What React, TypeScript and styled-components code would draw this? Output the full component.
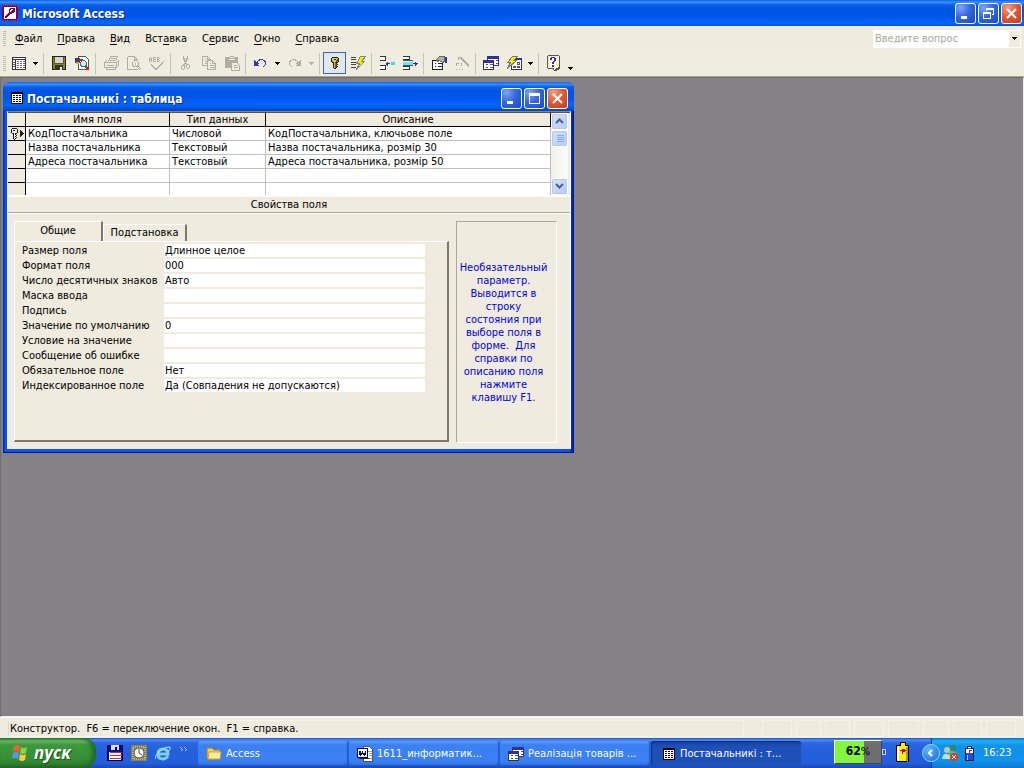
import React from "react";
import styled, { createGlobalStyle, css } from "styled-components";

const FACE = "#efebde";
const GREY = "#aca899";
const OFF = "#b3afa0";

const Global = createGlobalStyle`
  *, *::before, *::after { box-sizing: border-box; }
  body {
    margin: 0;
    background: #848284;
    font: 11px/14px "DejaVu Sans Condensed", "DejaVu Sans", sans-serif;
    color: #000;
    cursor: default;
  }
  button, input { font: inherit; color: inherit; padding: 0; margin: 0; border: 0; border-radius: 0; background: none; }
  svg { display: block; flex: none; }
`;

/* ---------- shell ---------- */

const Shell = styled.div`
  min-height: 100vh;
  display: flex;
  flex-direction: column;
`;

const blueBar = css`
  background: linear-gradient(#0a5cf0 0, #3a93ff 2px, #0a5eea 5px, #0054e3 9px, #0055e8 16px, #0166ff 23px, #0150d8 27px, #003cc0 30px);
`;

const TitleBar = styled.header`
  ${blueBar}
  height: 26px;
  flex: none;
  display: flex;
  align-items: center;
  gap: 4px;
  padding: 0 2px;
`;

const Title = styled.h1`
  flex: 1;
  margin: 0;
  padding-top: 1px;
  font-size: 12px;
  line-height: 16px;
  font-weight: bold;
  color: #fff;
  text-shadow: 1px 1px 0 #0a2a90;
  white-space: nowrap;
`;

const CaptionButtons = styled.div`
  display: flex;
  gap: 2px;
`;

const CaptionButton = styled.button<{ $close?: boolean }>`
  width: 21px;
  height: 21px;
  display: grid;
  place-items: center;
  border: 1px solid #fff;
  border-radius: 3px;
  background: ${(p) =>
    p.$close
      ? "radial-gradient(circle at 30% 20%, #f0a088 0, #e25a35 45%, #c83c14 100%)"
      : "radial-gradient(circle at 25% 20%, #7ea4f4 0, #3468e0 45%, #1c48c8 100%)"};
`;

const Grip = styled.span`
  width: 3px;
  height: 15px;
  flex: none;
  background: repeating-linear-gradient(#c1bdac 0 1px, transparent 1px 2px);
`;

const MenuBar = styled.nav`
  height: 25px;
  flex: none;
  display: flex;
  align-items: center;
  padding: 0 3px;
  background: ${FACE};
  ${Grip} { margin-right: 2px; }
`;

const MenuItem = styled.button`
  height: 20px;
  padding: 0 8px 0 7px;
  white-space: nowrap;
  u { text-underline-offset: 2px; }
`;

const AskBox = styled.div`
  margin-left: auto;
  width: 148px;
  height: 18px;
  display: flex;
  border: 1px solid #fff;
  background: #fff;
  input { flex: 1; min-width: 0; padding-left: 1px; outline: 0; }
  input::placeholder { color: ${GREY}; opacity: 1; }
  button { width: 11px; display: grid; place-items: center; background: ${FACE}; }
`;

const ToolBar = styled.div`
  height: 26px;
  flex: none;
  display: flex;
  align-items: center;
  padding: 0 3px 1px;
  background: #efeddf;
  border-bottom: 1px solid ${GREY};
  ${Grip} { margin-right: 1px; }
`;

const ToolButton = styled.button<{ $on?: boolean }>`
  width: 23px;
  height: 22px;
  flex: none;
  display: grid;
  place-items: center;
  ${(p) => p.$on && css`border: 1px solid #316ac5; background: #e2e6f0;`}
`;

const DropButton = styled.button<{ $low?: boolean }>`
  width: 11px;
  height: 22px;
  flex: none;
  display: grid;
  place-items: ${(p) => (p.$low ? "end center" : "center")};
  padding-bottom: ${(p) => (p.$low ? "4px" : "0")};
`;

const Separator = styled.span`
  width: 1px;
  height: 21px;
  flex: none;
  margin: 0 3px 0 2px;
  background: #c5c2b8;
`;

const Desktop = styled.main`
  flex: 1;
  padding: 4px 3px;
  background: #848284;
  border: 1px solid;
  border-color: #716f64 #f1efe2 #f1efe2 #716f64;
`;

/* ---------- child window ---------- */

const Frame = styled.section`
  width: 571px;
  max-width: 100%;
  margin-left: -1px;
  padding: 0 3px 3px 4px;
  border-radius: 7px 7px 0 0;
  background: linear-gradient(90deg, #0019b8 0, #0a4ff0 2px, #0a55f5 4px, #0a55f5 calc(100% - 4px), #0030d8 calc(100% - 3px), #001590 100%);
  border-bottom: 1px solid #001590;
`;

const FrameTitle = styled(TitleBar)`
  height: 29px;
  margin: 0 -3px 0 -4px;
  padding: 3px 6px 0 8px;
  border-radius: 7px 7px 0 0;
`;

const Client = styled.div`
  background: ${FACE};
  border: solid;
  border-width: 1px 1px 0 1px;
  border-color: #8a877a #fff #fff #f5f3ea;
`;

const GridPane = styled.div`
  display: flex;
  padding-right: 2px;
  height: 85px;
  border-top: 1px solid #55534a;
  border-bottom: 2px solid #fff;
`;

const FieldTable = styled.table`
  flex: 1;
  height: 82px;
  table-layout: fixed;
  border-collapse: separate;
  border-spacing: 0;
  background: #fff;
  line-height: 13px;
  th, td {
    height: 14px;
    padding: 0 2px;
    font-weight: normal;
    white-space: nowrap;
    overflow: hidden;
    border: solid #c0c0c0;
    border-width: 0 1px 1px 0;
  }
  td { text-align: left; }
  thead th { background: ${FACE}; border-color: #000; }
  tbody th { padding: 0 0 0 3px; background: ${FACE}; border-color: #000; }
  tbody tr:last-child > * { height: 12px; border-bottom: 0; }
`;

const Scroll = styled.div`
  width: 17px;
  display: flex;
  flex-direction: column;
  background: linear-gradient(90deg, #f0efe8, #fdfdfb);
`;

const ScrollPart = styled.button<{ $last?: boolean }>`
  height: 17px;
  display: grid;
  place-items: center;
  border: 1px solid #fff;
  border-radius: 3px;
  outline: 1px solid #b4c8f0;
  outline-offset: -2px;
  background: linear-gradient(135deg, #d5e1ff, #b5cbfb);
  ${(p) => p.$last && css`margin-top: auto;`}
`;

const SectionTitle = styled.h2`
  height: 16px;
  margin: 0;
  padding-top: 1px;
  font-size: 11px;
  line-height: 14px;
  font-weight: normal;
  text-align: center;
  border-bottom: 1px solid ${GREY};
`;

const Properties = styled.div`
  display: flex;
  gap: 7px;
  padding: 7px 13px 6px 6px;
  border-top: 1px solid #fff;
`;

const TabPane = styled.div`
  flex: 1;
  display: flex;
  flex-direction: column;
  padding-bottom: 1px;
`;

const Tabs = styled.div`
  height: 20px;
  display: flex;
  align-items: flex-end;
`;

const Tab = styled.button<{ $active?: boolean }>`
  height: ${(p) => (p.$active ? "21px" : "17px")};
  width: ${(p) => (p.$active ? "89px" : "84px")};
  padding-bottom: ${(p) => (p.$active ? "2px" : "0")};
  margin-bottom: ${(p) => (p.$active ? "-1px" : "0")};
  background: ${FACE};
  border: solid;
  border-width: 1px 2px 0 1px;
  border-color: #fff #7c796c #fff #fff;
  border-radius: 2px 1px 0 0;
`;

const TabBody = styled.form`
  flex: 1;
  margin: 0;
  padding: 2px 22px 0 7px;
  display: flex;
  flex-direction: column;
  gap: 2px;
  border: solid;
  border-width: 1px 2px 2px 1px;
  border-color: #fff #7c796c #7c796c #fff;
`;

const Property = styled.label`
  display: flex;
  height: 13px;
  line-height: 13px;
  white-space: nowrap;
  span { width: 142px; flex: none; }
  input { flex: 1; min-width: 0; height: 13px; padding-left: 1px; background: #fff; outline: 0; }
`;

const Hint = styled.aside`
  width: 101px;
  height: 222px;
  padding: 0 8px 0 2px;
  display: flex;
  align-items: center;
  justify-content: center;
  text-align: center;
  line-height: 13px;
  color: #0000f0;
  white-space: pre-line;
  border: 1px solid;
  border-color: ${GREY} #fff #fff ${GREY};
`;

/* ---------- status bar and taskbar ---------- */

const StatusBar = styled.footer`
  height: 21px;
  flex: none;
  display: flex;
  gap: 4px;
  padding: 2px 8px 1px;
  background: ${FACE};
  border-top: 1px solid #fff;
`;

const StatusText = styled.div`
  flex: 1;
  margin-right: 14px;
  padding: 1px;
  border: 1px solid #f6f3ea;
  border-left-color: #dedac9;
  line-height: 14px;
`;

const StatusCell = styled.span<{ $w: number }>`
  width: ${(p) => p.$w}px;
  border: 1px solid #f6f3e8;
`;

const TaskBar = styled.div`
  height: 30px;
  flex: none;
  display: flex;
  color: #fff;
  background: linear-gradient(#1f4fc4 0, #4a8cf5 2px, #2a66e2 5px, #245edb 15px, #245edb 25px, #1a48b8 30px);
`;

const Start = styled.button`
  width: 96px;
  flex: none;
  display: flex;
  align-items: center;
  gap: 5px;
  padding-left: 10px;
  border-radius: 0 12px 12px 0;
  background: linear-gradient(#2f7a2f 0, #6cb96c 3px, #3b983b 7px, #388f38 20px, #2f8230 26px, #226022 30px);
  box-shadow: inset -4px 0 5px #1f6a24;
  font: italic bold 17px/20px "Open Sans", "Noto Sans", sans-serif;
  text-shadow: 1px 1px 1px #1a4a1a;
`;

const Quick = styled.div`
  width: 102px;
  flex: none;
  display: flex;
  gap: 8px;
  padding: 7px 0 0 11px;
  button { width: 16px; height: 16px; }
`;

const Tasks = styled.div`
  flex: 1;
  min-width: 0;
  display: flex;
  gap: 1px;
  padding: 3px 0 2px;
`;

const Task = styled.button<{ $active?: boolean }>`
  flex: 0 1 150px;
  min-width: 0;
  display: flex;
  align-items: center;
  gap: ${(p) => (p.$active ? "5px" : "4px")};
  padding: ${(p) => (p.$active ? "1px 0 0 12px" : "0 0 0 8px")};
  border-radius: 3px;
  white-space: nowrap;
  background: ${(p) =>
    p.$active
      ? "linear-gradient(#153c95, #1e4fb8 5px, #1e52b7)"
      : "linear-gradient(#5a9bfa 0, #3c81f3 4px, #3a80f4 20px, #2f6ee0)"};
  box-shadow: ${(p) => (p.$active ? "inset 1px 1px 1px #10307c" : "inset -1px -1px 1px #2358c4")};
`;

const Power = styled.div`
  flex: none;
  display: flex;
  align-items: center;
  gap: 11px;
  padding: 0 18px 2px 0;
`;

const Battery = styled.div`
  position: relative;
  width: 48px;
  height: 24px;
  border: 1px solid;
  border-color: #fff #444 #444 #fff;
  background: linear-gradient(90deg, #82f83c 29px, #6e6e6e 29px);
  color: #000;
  font: bold 12px/20px "DejaVu Sans Condensed", "DejaVu Sans", sans-serif;
  text-align: center;
  small { font-size: 11px; font-weight: normal; }
  &::after {
    content: "";
    position: absolute;
    right: -5px;
    top: 8px;
    width: 4px;
    height: 6px;
    border: 1px solid #c9d4ee;
  }
`;

const Tray = styled.div`
  width: 93px;
  flex: none;
  display: flex;
  align-items: center;
  gap: 2px;
  border-left: 1px solid #0c3fa8;
  background: linear-gradient(#0c70d0 0, #1cb0f8 3px, #1290e8 8px, #1194ec 22px, #0d78d0 30px);
`;

const TrayToggle = styled.button`
  width: 18px;
  height: 18px;
  margin-left: -10px;
  display: grid;
  place-items: center;
  border: 1px solid #9cd4fa;
  border-radius: 50%;
  background: radial-gradient(circle at 35% 30%, #5ab8f8, #1468d8);
`;

const Clock = styled.time`
  margin-left: 4px;
`;

/* ---------- drawings ---------- */

type GlyphProps = { size?: number; children: React.ReactNode };

/* Integer coordinates fall on pixel centres. */
const Glyph = ({ size = 16, children }: GlyphProps) => (
  <svg width={size} height={size} viewBox={`-0.5 -0.5 ${size} ${size}`} shapeRendering="crispEdges" fill="none" stroke="#000" aria-hidden="true">
    {children}
  </svg>
);

/* Draws one square for each non-blank character of the map. */
const PixelMap = ({ rows, colors }: { rows: string[]; colors: Record<string, string> }) => {
  const width = Math.max(...rows.map((r) => r.length));
  return (
    <svg width={width} height={rows.length} shapeRendering="crispEdges" aria-hidden="true">
      {rows.flatMap((row, y) =>
        [...row].map((c, x) => (colors[c] ? <rect key={`${x}-${y}`} x={x} y={y} width="1" height="1" fill={colors[c]} /> : null)),
      )}
    </svg>
  );
};

const Caret = ({ color = "#000" }: { color?: string }) => (
  <PixelMap rows={["#####", " ### ", "  #  "]} colors={{ "#": color }} />
);

const AccessLogo = () => (
  <PixelMap
    colors={{ "#": "#840042", ".": "#fff", o: "#c03070" }}
    rows={[
      "#o#o#o#o#o#o#o#o", "o##############o", "##............##", "##......#####.##",
      "##.....##..##.##", "##.....#..###.##", "##.....#.####.##", "##.....#####..##",
      "##....####....##", "##...###......##", "##..###.......##", "##.###........##",
      "##.##.........##", "##............##", "o##############o", "#o#o#o#o#o#o#o#o",
    ]}
  />
);

const TableView = () => (
  <PixelMap
    colors={{ "#": "#333", ".": "#fff", "-": "#666", g: "#aaa" }}
    rows={[
      "##############", "#............#", "##############", "#..#.........#", "#..#.--.--.--#", "#--#.........#",
      "#..#.--.--.--#", "#--#.........#", "#..#.--.--.--#", "#--#.........#", "#..#.--.--.--#", "#..#.........#", "##############",
    ]}
  />
);

const TableWhite = () => (
  <PixelMap
    colors={{ "#": "#000", ".": "#fff" }}
    rows={[
      "############", "############", "#..........#", "#.##.##.##.#", "#..........#", "#.##.##.##.#",
      "#..........#", "#.##.##.##.#", "#..........#", "#.##.##.##.#", "#..........#", "############",
    ]}
  />
);

const SaveGlyph = () => (
  <Glyph>
    <rect x="1" y="1" width="13" height="13" fill="#848420" stroke="#222" />
    <rect x="4" y="2" width="7" height="5" fill="#d4d4d8" stroke="#d4d4d8" />
    <path d="M3 1v7h9v-7" stroke="#5a5a10" />
    <rect x="4" y="10" width="7" height="4" fill="#333" stroke="#333" />
    <path d="M9 11v3M10 11v3" stroke="#e8e8e8" />
  </Glyph>
);

const SearchFileGlyph = () => (
  <Glyph>
    <path d="M4 1h7l3 3v10h-10z" fill="#fff" stroke="#555" />
    <path d="M1 3h4v4h-4z" fill="#2838b0" stroke="#444" />
    <path d="M5 4h3v1h-3z" stroke="#d02020" />
    <path d="M1 7h3M1 8h3" stroke="#e0b000" />
    <path d="M5 7h2M5 8h2" stroke="#2030c0" />
    <circle cx="9" cy="8" r="3" fill="#b8f4f8" stroke="#567" />
    <path d="M12 11l3 3M11 11l4 4M11 12l3 3" stroke="#d82020" />
  </Glyph>
);

const PrintGlyph = () => (
  <Glyph>
    <path d="M5 6l2-5h7l-2 5M7 3h5M6 5h5M1 7h12v5h-12zM1 7l2-2M13 7l2-2v5l-2 2M3 12v2h9v-2M3 10h7" stroke={OFF} />
  </Glyph>
);

const PreviewGlyph = () => (
  <Glyph>
    <path d="M1 1h7l3 3M1 1v13h10M8 1v3h3" stroke={OFF} />
    <circle cx="9" cy="8" r="3" stroke={OFF} />
    <path d="M11 10l4 4M10 11l4 4M9 7v2" stroke={OFF} />
  </Glyph>
);

const SpellGlyph = () => (
  <PixelMap
    colors={{ "#": OFF }}
    rows={[
      " #  ### ##     ", "# # #   # #    ", "### ### ##     ", "# # #   # #    ", "# # ### ##    #",
      "             # ", "            ## ", "  #        ##  ", "  ##      ##   ", "   ##    ##    ",
      "    ##  ##     ", "     ####      ", "      ##       ",
    ]}
  />
);

const CutGlyph = () => (
  <PixelMap
    colors={{ "#": OFF }}
    rows={[
      "  #   #  ", "  #   #  ", "  ## ##  ", "  ## ##  ", "   ###   ", "   ###   ", "    #    ", "   ###   ",
      "  ## ### ", " ### #  #", "#  # #  #", "#  # #  #", "#  #  ## ", " ##      ",
    ]}
  />
);

const CopyGlyph = () => (
  <Glyph>
    <path d="M6 10h-5v-9h5l3 3M6 1v3h3M3 4h1M3 6h3M3 8h3M6 5h5l3 3v6h-8zM11 5v3h3M8 8h1M8 10h5M8 12h5" stroke={OFF} />
  </Glyph>
);

const PasteGlyph = () => (
  <Glyph>
    <path d="M1 2h12v10h-12z" fill={OFF} stroke={OFF} />
    <path d="M4 4h6M5 2h4" stroke="#efeddf" />
    <path d="M5 1h4M7 7h5l3 3v5h-8z" fill="#efeddf" stroke={OFF} />
    <path d="M9 10h3M9 12h4" stroke={OFF} />
  </Glyph>
);

const UndoGlyph = ({ color, flip }: { color: string; flip?: boolean }) => (
  <PixelMap
    colors={{ "#": color }}
    rows={[
      "     ####    ", "#   ##   ##  ", "## #      ## ", "####       # ", "#####      # ", "####       # ",
      "#####     #  ", "         #   ",
    ].map((r) => (flip ? [...r].reverse().join("") : r))}
  />
);

const KeyGlyph = () => (
  <PixelMap
    colors={{ "#": "#222", y: "#d8cc20", d: "#6c6410" }}
    rows={[
      " ###### ", "#yyyyyy#", "#yy##yd#", "#yyyydd#", "#dyyydd#", " ##yd## ", "  #yd#  ", "  #ydd# ",
      "  #yd#  ", "  #ydd# ", "  #yd#  ", "   ##   ",
    ]}
  />
);

const IndexGlyph = () => (
  <Glyph>
    <path d="M0 2h5M0 4h5M0 7h5M0 9h5M0 12h5" stroke="#444" />
    <path d="M10 1h5l-4 5h3l-8 8l3-6h-3z" fill="#f8f000" stroke="#888" />
  </Glyph>
);

const InsertRowGlyph = () => (
  <Glyph>
    <path d="M0 1h6v4h-6M0 10h6v4h-6" fill="#fff" stroke="#333" />
    <path d="M6 8h4M8 6v4M7 7v2" stroke="#3030a8" />
    <path d="M11 7h4M11 8h4M11 9h4" stroke="#50d4dc" />
  </Glyph>
);

const DeleteRowGlyph = () => (
  <Glyph>
    <path d="M0 1h7v3h-7M0 11h7v3h-7" stroke="#333" fill="#fff" />
    <path d="M0 6h10v4h-10z" fill="#70e4ec" stroke="none" />
    <path d="M0 5h10M0 10h10" stroke="#456" />
    <path d="M10 8h5M13 6v4M14 7v2" stroke="#3030a8" />
  </Glyph>
);

const PropertiesGlyph = () => (
  <Glyph>
    <path d="M1 5h10v9h-10z" fill="#fff" stroke="#222" />
    <path d="M3 8h1M3 11h1M6 8h4M6 11h4" stroke="#222" />
    <path d="M5 4l3-3h5v5l-2 1l-3-2l-2 1z" fill="#b4b0a4" stroke="#666" />
    <path d="M14 1v6M15 1v6" stroke="#3030a8" />
  </Glyph>
);

const WizardGlyph = () => (
  <Glyph>
    <path d="M6 3l9 9M7 3l8 8M7 2l8 8M1 8h3M2 7v3M4 1v3M3 2h3M7 7v3M1 14h1M4 14h1M7 14h1" stroke={OFF} />
  </Glyph>
);

const DatabaseGlyph = () => (
  <Glyph>
    <path d="M4 1h11v9h-11z" fill="#fff" stroke="#3030a0" />
    <path d="M4 2h11M4 3h11" stroke="#3030a0" />
    <path d="M0 5h10v9h-10z" fill="#fff" stroke="#333" />
    <path d="M0 5h10M0 6h10M0 7h10" stroke="#3030a0" />
    <path d="M2 9h2M6 9h3M2 12h2M6 12h3M12 5h2M12 8h2" stroke="#555" />
  </Glyph>
);

const NewObjectGlyph = () => (
  <Glyph>
    <path d="M5 3h10v11h-10z" fill="#fff" stroke="#333" />
    <path d="M6 3h9M6 4h9" stroke="#3030a0" />
    <path d="M11 7h2v2h-2zM11 11h2v1h-2zM7 11h2v1h-2z" stroke="#555" />
    <path d="M6 1h5l-4 4h3l-9 8l3-6h-3z" fill="#f8f000" stroke="#777" />
  </Glyph>
);

const HelpGlyph = () => (
  <PixelMap
    colors={{ "#": "#555", y: "#f8ee70", ".": "#fffdf0", b: "#3030b0" }}
    rows={[
      " ########### ", "#.y.y.y.y.y.#", "#y..bbbb..y.#", "#..bb..bb..y#", "#y.bb..bb.y.#", "#.y....bb..y#", "#y....bb..y.#",
      "#.y..bb..y.y#", "#y...bb...y.#", "#.y......y.y#", "#y...bb...y.#", "#.y..bb..y.y#", "#y.y.y.y.y.##", " ######..####",
      "      #.#### ", "       ###   ",
    ]}
  />
);

const MinimizeGlyph = () => (
  <Glyph size={13}><path d="M1 9h6M1 10h6M1 11h6" stroke="#fff" /></Glyph>
);
const MaximizeGlyph = () => (
  <Glyph size={13}><path d="M1 1h10v10h-10zM1 2h10M1 3h10" stroke="#fff" /></Glyph>
);
const RestoreGlyph = () => (
  <Glyph size={13}><path d="M4 3v-2h7v6h-2M4 2h7M1 5h7v6h-7zM1 6h7" stroke="#fff" /></Glyph>
);
const CloseGlyph = () => (
  <svg width="13" height="13" aria-hidden="true"><path d="M2 2l9 9M11 2l-9 9" stroke="#fff" strokeWidth="2" /></svg>
);

const Chevron = ({ d }: { d: string }) => (
  <svg width="9" height="7" aria-hidden="true"><path d={d} fill="none" stroke="#4d6185" strokeWidth="2" /></svg>
);

const RowKeyGlyph = () => (
  <PixelMap
    colors={{ "#": "#222", y: "#f4f0d8" }}
    rows={[
      " #####       ", "#yyyyy#      ", "#y##yy#  #   ", "#yyyyy#  ##  ", "#yyyyy#  ### ", " ##y##   ####",
      "  #y#    ### ", "  #yy#   ##  ", "  #y#    #   ", "  #yy#       ", "  #y#        ", "   #         ",
    ]}
  />
);

const WindowsFlag = () => (
  <svg width="19" height="18" viewBox="0 0 19 18" aria-hidden="true">
    <path d="M4 2q3-2 6 0l-1 6q-3-2-6 0z" fill="#f0602c" />
    <path d="M11 3q3 2 6 0l-1 6q-3 2-6 0z" fill="#8cd048" />
    <path d="M3 9q3-2 6 0l-1 6q-3-2-6 0z" fill="#5c94f4" />
    <path d="M10 10q3 2 6 0l-1 6q-3 2-6 0z" fill="#fccc34" />
  </svg>
);

const FloppyGlyph = () => (
  <Glyph>
    <path d="M0 0h15v15h-15z" fill="#0a0a90" stroke="#000060" />
    <path d="M4 0h7v4h-7z" fill="#ddd" stroke="#ddd" />
    <path d="M8 1v3M9 1v3" stroke="#000060" />
    <path d="M2 7h11v7h-11z" fill="#fff" stroke="#fff" />
    <path d="M2 7h12M2 10h12M2 13h12" stroke="#e02020" />
  </Glyph>
);

const OutlookGlyph = () => (
  <svg width="16" height="16" aria-hidden="true">
    <path d="M0 0h16v16h-16z" fill="#8c8448" />
    <path d="M2 2h12v12h-12z" fill="none" stroke="#e8e4c0" strokeDasharray="1 1" />
    <circle cx="8" cy="8" r="5" fill="#fff" stroke="#555" />
    <path d="M8 4v4l3 2" fill="none" stroke="#444" />
  </svg>
);

const ExplorerGlyph = () => (
  <svg width="16" height="16" aria-hidden="true">
    <path d="M13 11q-2 3-5 3q-5 0-5-5q0-5 5-5q5 0 5 5h-9" fill="none" stroke="#7cccfc" strokeWidth="3" />
    <path d="M1 14q-2-3 4-8t10-4q1 2-2 5" fill="none" stroke="#b8e8ff" strokeWidth="1" />
  </svg>
);

const FolderGlyph = () => (
  <svg width="16" height="16" aria-hidden="true">
    <path d="M1 3q0-1 1-1h4l2 2h5q1 0 1 1v8h-12q-1 0-1-1z" fill="#f4cc50" stroke="#a87c18" />
    <path d="M3 6h12l-1 7h-12z" fill="#fdec9c" stroke="#d0a030" />
  </svg>
);

const WordGlyph = () => (
  <Glyph>
    <path d="M6 0h6l3 3v12h-9z" fill="#fff" stroke="#555" />
    <path d="M10 5h4M11 7h3M11 9h3M10 12h4" stroke="#999" />
    <path d="M0 2h10v9h-10z" fill="#fff" stroke="#000080" />
    <path d="M2 4v3l1 2l1-1l1-2l1 2l1 1l1-2v-3M3 4v4M5 4v3M7 6v2" stroke="#000080" />
    <path d="M1 12h10" stroke="#222" />
  </Glyph>
);

const CarryBatteryGlyph = () => (
  <Glyph size={20}>
    <path d="M7 0h5v3h3v16h-12v-16h4z" fill="#f8f010" stroke="#000" />
    <path d="M4 4v14M5 4v14" stroke="#fff" />
    <path d="M6 8h6M9 6v5M8 7h3M8 9h3" stroke="#d00000" />
    <path d="M13 4v14M14 4v15" stroke="#b09800" />
  </Glyph>
);

const PeopleGlyph = () => (
  <svg width="17" height="18" aria-hidden="true">
    <circle cx="11" cy="4" r="3" fill="#2c8c5c" />
    <path d="M6 12q1-6 5-5t5 5z" fill="#5cb88c" />
    <circle cx="5" cy="6" r="3" fill="#b8c8c0" />
    <path d="M0 15q1-6 5-5t5 5z" fill="#c8dccc" />
    <circle cx="12" cy="13" r="4" fill="#e03818" />
    <path d="M10 11l4 4M14 11l-4 4" stroke="#fff" />
  </svg>
);

const TrayBatteryGlyph = () => (
  <Glyph size={16}>
    <path d="M6 1h4v2h2v12h-8v-12h2z" fill="#2050d8" stroke="#101850" />
    <path d="M5 4h6v3h-6zM6 2h3" fill="#fff" stroke="#fff" />
    <path d="M7 5h3M8 4v3" stroke="#d01010" />
    <path d="M6 9v5" stroke="#a8c8ff" />
  </Glyph>
);

/* ---------- content ---------- */

const menus: [string, string, string][] = [
  ["", "Ф", "айл"], ["", "П", "равка"], ["", "В", "ид"], ["Вст", "а", "вка"], ["С", "е", "рвис"], ["", "О", "кно"], ["", "С", "правка"],
];

type Tool = { label: string; icon: React.ReactNode; on?: boolean; drop?: string };

const toolGroups: Tool[][] = [
  [{ label: "Режим", icon: <TableView />, drop: "#000" }],
  [{ label: "Сохранить", icon: <SaveGlyph /> }, { label: "Найти файл", icon: <SearchFileGlyph /> }],
  [{ label: "Печать", icon: <PrintGlyph /> }, { label: "Просмотр", icon: <PreviewGlyph /> }, { label: "Орфография", icon: <SpellGlyph /> }],
  [{ label: "Вырезать", icon: <CutGlyph /> }, { label: "Копировать", icon: <CopyGlyph /> }, { label: "Вставить", icon: <PasteGlyph /> }],
  [{ label: "Отменить", icon: <UndoGlyph color="#3838a0" />, drop: "#000" }, { label: "Вернуть", icon: <UndoGlyph color={OFF} flip />, drop: OFF }],
  [{ label: "Ключевое поле", icon: <KeyGlyph />, on: true }, { label: "Индексы", icon: <IndexGlyph /> }],
  [{ label: "Добавить строки", icon: <InsertRowGlyph /> }, { label: "Удалить строки", icon: <DeleteRowGlyph /> }],
  [{ label: "Свойства", icon: <PropertiesGlyph /> }, { label: "Построить", icon: <WizardGlyph /> }],
  [{ label: "Окно базы данных", icon: <DatabaseGlyph /> }, { label: "Новый объект", icon: <NewObjectGlyph />, drop: "#000" }],
  [{ label: "Справка", icon: <HelpGlyph /> }],
];

const fields = [
  ["КодПостачальника", "Числовой", "КодПостачальника, ключьове поле"],
  ["Назва постачальника", "Текстовый", "Назва постачальника, розмір 30"],
  ["Адреса постачальника", "Текстовый", "Адреса постачальника, розмір 50"],
  ["", "", ""],
  ["", "", ""],
];

const properties = [
  ["Размер поля", "Длинное целое"],
  ["Формат поля", "000"],
  ["Число десятичных знаков", "Авто"],
  ["Маска ввода", ""],
  ["Подпись", ""],
  ["Значение по умолчанию", "0"],
  ["Условие на значение", ""],
  ["Сообщение об ошибке", ""],
  ["Обязательное поле", "Нет"],
  ["Индексированное поле", "Да (Совпадения не допускаются)"],
];

const hint = `Необязательный
параметр.
Выводится в
строку
состояния при
выборе поля в
форме.\u00a0 Для
справки по
описанию поля
нажмите
клавишу F1.`;

const statusCells = [30, 25, 25, 30, 31, 26, 29, 30];

const tasks = [
  { label: "Access", icon: <FolderGlyph /> },
  { label: "1611_информатик...", icon: <WordGlyph /> },
  { label: "Реалізація товарів ...", icon: <DatabaseGlyph /> },
  { label: "Постачальникі : т...", icon: <TableWhite />, active: true },
];

export default function App() {
  return (
    <Shell>
      <Global />
      <TitleBar>
        <AccessLogo />
        <Title>Microsoft Access</Title>
        <CaptionButtons>
          <CaptionButton aria-label="Свернуть"><MinimizeGlyph /></CaptionButton>
          <CaptionButton aria-label="Восстановить"><RestoreGlyph /></CaptionButton>
          <CaptionButton $close aria-label="Закрыть"><CloseGlyph /></CaptionButton>
        </CaptionButtons>
      </TitleBar>
      <MenuBar>
        <Grip />
        {menus.map(([before, key, after]) => (
          <MenuItem key={before + key + after}>{before}<u>{key}</u>{after}</MenuItem>
        ))}
        <AskBox>
          <input aria-label="Вопрос" placeholder="Введите вопрос" />
          <button aria-label="Список вопросов"><Caret /></button>
        </AskBox>
      </MenuBar>
      <ToolBar role="toolbar">
        <Grip />
        {toolGroups.map((group, i) => (
          <React.Fragment key={i}>
            {i > 0 && <Separator />}
            {group.map((t) => (
              <React.Fragment key={t.label}>
                <ToolButton $on={t.on} aria-label={t.label}>{t.icon}</ToolButton>
                {t.drop && <DropButton aria-label={`${t.label}: список`}><Caret color={t.drop} /></DropButton>}
              </React.Fragment>
            ))}
          </React.Fragment>
        ))}
        <DropButton $low aria-label="Параметры панели"><Caret /></DropButton>
      </ToolBar>

      <Desktop>
        <Frame>
          <FrameTitle>
            <TableWhite />
            <Title as="h2">Постачальникі : таблица</Title>
            <CaptionButtons>
              <CaptionButton aria-label="Свернуть окно"><MinimizeGlyph /></CaptionButton>
              <CaptionButton aria-label="Развернуть окно"><MaximizeGlyph /></CaptionButton>
              <CaptionButton $close aria-label="Закрыть окно"><CloseGlyph /></CaptionButton>
            </CaptionButtons>
          </FrameTitle>
          <Client>
            <GridPane>
              <FieldTable>
                <colgroup>
                  <col width="18" />
                  <col width="144" />
                  <col width="96" />
                  <col />
                </colgroup>
                <thead>
                  <tr><th /><th>Имя поля</th><th>Тип данных</th><th>Описание</th></tr>
                </thead>
                <tbody>
                  {fields.map((row, i) => (
                    <tr key={i}>
                      <th scope="row">{i === 0 && <RowKeyGlyph />}</th>
                      {row.map((cell, j) => <td key={j}>{cell}</td>)}
                    </tr>
                  ))}
                </tbody>
              </FieldTable>
              <Scroll>
                <ScrollPart aria-label="Вверх"><Chevron d="M1 5l3.5-3.5L8 5" /></ScrollPart>
                <ScrollPart aria-label="Ползунок">
                  <Glyph size={8}><path d="M0 0h7M0 2h7M0 4h7M0 6h7" stroke="#8caae6" /></Glyph>
                </ScrollPart>
                <ScrollPart $last aria-label="Вниз"><Chevron d="M1 1l3.5 3.5L8 1" /></ScrollPart>
              </Scroll>
            </GridPane>
            <SectionTitle>Свойства поля</SectionTitle>
            <Properties>
              <TabPane>
                <Tabs role="tablist">
                  <Tab $active role="tab" aria-selected="true">Общие</Tab>
                  <Tab role="tab" aria-selected="false">Подстановка</Tab>
                </Tabs>
                <TabBody>
                  {properties.map(([name, value]) => (
                    <Property key={name}><span>{name}</span><input defaultValue={value} /></Property>
                  ))}
                </TabBody>
              </TabPane>
              <Hint>{hint}</Hint>
            </Properties>
          </Client>
        </Frame>
      </Desktop>

      <StatusBar>
        <StatusText>Конструктор.&nbsp; F6 = переключение окон.&nbsp; F1 = справка.</StatusText>
        {statusCells.map((w, i) => <StatusCell key={i} $w={w} />)}
      </StatusBar>
      <TaskBar>
        <Start><WindowsFlag />пуск</Start>
        <Quick>
          <button aria-label="Дискета"><FloppyGlyph /></button>
          <button aria-label="Outlook"><OutlookGlyph /></button>
          <button aria-label="Internet Explorer"><ExplorerGlyph /></button>
          <button aria-label="Ещё">
            <Glyph size={12}><path d="M1 0l2 2l-2 2M5 0l2 2l-2 2" stroke="#a8c8ff" /></Glyph>
          </button>
        </Quick>
        <Tasks>
          {tasks.map((t) => (
            <Task key={t.label} $active={t.active}>{t.icon}{t.label}</Task>
          ))}
        </Tasks>
        <Power>
          <Battery>62<small>%</small></Battery>
          <CarryBatteryGlyph />
        </Power>
        <Tray>
          <TrayToggle aria-label="Показать значки">
            <svg width="8" height="8" aria-hidden="true"><path d="M5 1L2 4l3 3" fill="none" stroke="#fff" strokeWidth="2" /></svg>
          </TrayToggle>
          <PeopleGlyph />
          <TrayBatteryGlyph />
          <Clock>16:23</Clock>
        </Tray>
      </TaskBar>
    </Shell>
  );
}
